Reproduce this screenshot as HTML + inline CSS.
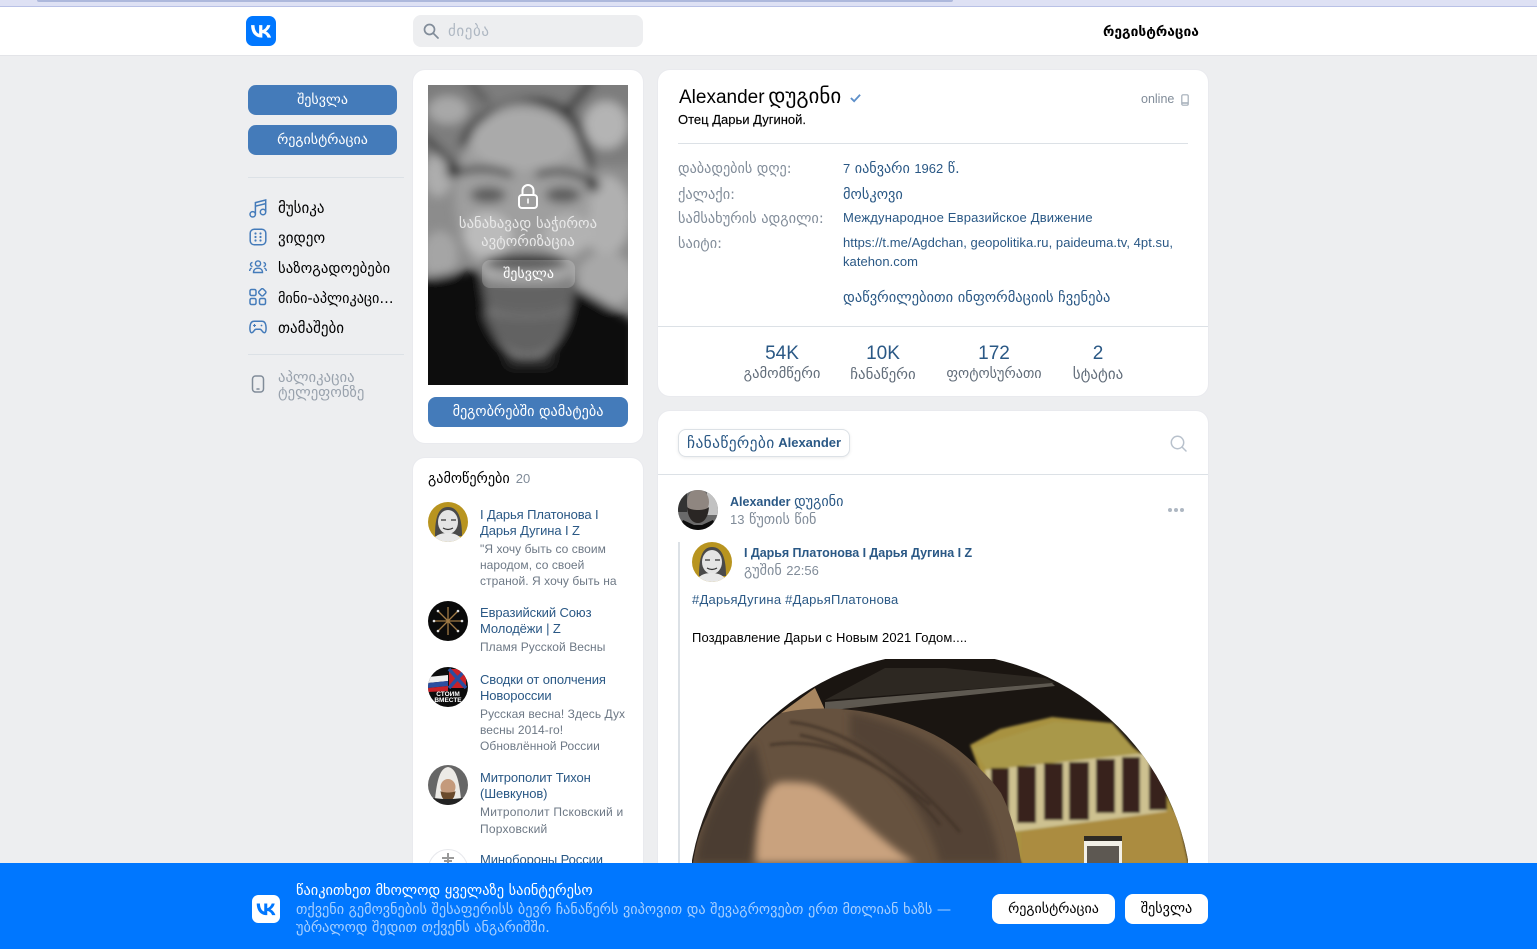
<!DOCTYPE html>
<html lang="ka"><head><meta charset="utf-8"><title>Alexander დუგინი</title>
<style>
html,body{margin:0;padding:0}
body{width:1537px;height:949px;overflow:hidden;background:#edeef0;position:relative;font:13px/16px "Liberation Sans","DejaVu Sans",sans-serif;color:#000}
.a,.t{position:absolute}
.t{white-space:nowrap}
.card{position:absolute;background:#fff;border-radius:12px;box-shadow:0 0 0 1px #e9eaee}
.btn{position:absolute;background:#447bba;color:#fff;border-radius:8px;text-align:center;white-space:nowrap}
.l{color:#2a5885}.g{color:#818c99}
.ka{font-size:14.2px;font-family:"DejaVu Sans",sans-serif}
.n{font:13px "Liberation Sans",sans-serif}
.side{font-size:15px}
.sub{font-size:12px;color:#6d7885;letter-spacing:.06px}
.nm{letter-spacing:-.1px;line-height:16.4px}
.num{width:80px;text-align:center;font-size:19px;line-height:24px}
.lab{width:120px;text-align:center;color:#626d7a;font-size:14.6px}
svg{position:absolute;display:block}
.hr{position:absolute;height:1px;background:#dce1e6}
</style></head><body>

<div class="a" style="left:0;top:0;width:1537px;height:7px;background:#dee1f4;border-bottom:1px solid #b9c1e6;box-sizing:border-box"></div>
<div class="a" style="left:37px;top:0;width:916px;height:2px;background:#adb8dc;border-radius:0 0 3px 3px"></div>

<div class="a" style="left:0;top:7px;width:1537px;height:48px;background:#fff;border-bottom:1px solid #e3e4e8"></div>
<svg style="left:246px;top:16px" width="30" height="30" viewBox="0 0 48 48"><rect width="48" height="48" rx="11" fill="#07f"/><path fill="#fff" d="M25.54 34.58c-10.94 0-17.18-7.5-17.44-19.98h5.48c.18 9.16 4.22 13.04 7.42 13.84V14.6h5.16v7.9c3.16-.34 6.48-3.94 7.6-7.9h5.16c-.86 4.88-4.46 8.48-7.02 9.96 2.56 1.2 6.66 4.34 8.22 10.02h-5.68c-1.22-3.8-4.26-6.74-8.28-7.14v7.14h-.62z"/></svg>
<div class="a" style="left:413px;top:15px;width:230px;height:32px;background:#edeef0;border-radius:8px"></div>
<svg style="left:423px;top:23px" width="16" height="16" viewBox="0 0 16 16" fill="none" stroke="#818c99" stroke-width="1.7"><circle cx="6.5" cy="6.5" r="5"/><path d="M10.3 10.3 15 15" stroke-linecap="round"/></svg>
<div class="t ka" style="left:448px;top:23px;color:#aeb7c2;font-size:15px;letter-spacing:.6px">ძიება</div>
<div class="t ka" style="left:1103px;top:24px;font-weight:bold;font-size:13.8px">რეგისტრაცია</div>

<div class="btn ka" style="left:248px;top:85px;width:149px;height:30px;line-height:31px;font-size:14px">შესვლა</div>
<div class="btn ka" style="left:248px;top:125px;width:149px;height:30px;line-height:31px;font-size:14px">რეგისტრაცია</div>
<div class="hr" style="left:248px;top:177px;width:156px"></div>

<svg style="left:249px;top:198px" width="18" height="20" viewBox="0 0 18 20" fill="none" stroke="#447bba" stroke-width="1.5"><circle cx="3.7" cy="16.3" r="2.7"/><circle cx="14" cy="14" r="2.7"/><path d="M6.4 16.3V4.6L16.7 2v12M6.4 8.2l10.3-2.6"/></svg>
<svg style="left:249px;top:228px" width="18" height="18" viewBox="0 0 18 18" fill="none" stroke="#447bba" stroke-width="1.5"><rect x="1.2" y="1.2" width="15.6" height="15.6" rx="4"/><g fill="#447bba" stroke="none"><circle cx="6.5" cy="5.5" r="1.1"/><circle cx="11.5" cy="5.5" r="1.1"/><circle cx="6.5" cy="9" r="1.1"/><circle cx="11.5" cy="9" r="1.1"/><circle cx="6.5" cy="12.5" r="1.1"/><circle cx="11.5" cy="12.5" r="1.1"/></g></svg>
<svg style="left:249px;top:260px" width="18" height="14" viewBox="0 0 18 14" fill="none" stroke="#447bba" stroke-width="1.4"><circle cx="9" cy="3.5" r="2.6"/><path d="M4.5 12.5c0-3 2-4.3 4.5-4.3s4.5 1.3 4.5 4.3zM3.5 2.5a2 2 0 0 0 0 4M14.5 2.5a2 2 0 0 1 0 4M.7 11c0-1.5.7-2.5 2-3M17.3 11c0-1.5-.7-2.5-2-3"/></svg>
<svg style="left:249px;top:288px" width="18" height="18" viewBox="0 0 18 18" fill="none" stroke="#447bba" stroke-width="1.5"><rect x="1" y="1.5" width="6" height="6" rx="1.5"/><rect x="1" y="10.5" width="6" height="6" rx="1.5"/><rect x="10.5" y="10.5" width="6" height="6" rx="1.5"/><rect x="10.3" y="1.3" width="6" height="6" rx="1.5" transform="rotate(45 13.3 4.3)"/></svg>
<svg style="left:249px;top:320px" width="18" height="14" viewBox="0 0 18 14" fill="none" stroke="#447bba" stroke-width="1.5"><path d="M5 1.2h8c2.2 0 3.3 1.3 3.8 4 .5 3 .5 7.5-1.5 7.5-2 0-2.5-3.5-4.3-3.5H7c-1.8 0-2.3 3.5-4.3 3.5-2 0-2-4.5-1.5-7.5.5-2.7 1.6-4 3.8-4z"/><path d="M5.5 4v3M4 5.5h3" stroke-width="1.1"/><circle cx="12.5" cy="5.5" r=".9" fill="#447bba" stroke="none"/></svg>

<div class="t ka side" style="left:278px;top:200px">მუსიკა</div>
<div class="t ka side" style="left:278px;top:230px">ვიდეო</div>
<div class="t ka side" style="left:278px;top:261px;font-size:14.8px">საზოგადოებები</div>
<div class="t ka side" style="left:278px;top:291px;width:120px;overflow:hidden;text-overflow:ellipsis;font-size:14.2px">მინი-აპლიკაციები</div>
<div class="t ka side" style="left:278px;top:320px">თამაშები</div>
<div class="hr" style="left:248px;top:354px;width:156px"></div>
<svg style="left:251px;top:375px" width="14" height="18" viewBox="0 0 14 18" fill="none" stroke="#818c99" stroke-width="1.5"><rect x="1.5" y="1" width="11" height="16" rx="3"/><path d="M6 14h2" stroke-linecap="round"/></svg>
<div class="t ka g" style="left:278px;top:370px;color:#99a2ad;font-size:14.7px">აპლიკაცია</div>
<div class="t ka g" style="left:278px;top:385px;color:#99a2ad;font-size:14.7px">ტელეფონზე</div>

<div class="card" style="left:413px;top:70px;width:230px;height:373px"></div>
<svg style="left:428px;top:85px" width="200" height="300" viewBox="0 0 200 300">
<defs><filter id="b" x="-20%" y="-20%" width="140%" height="140%"><feGaussianBlur stdDeviation="5"/></filter><clipPath id="c"><rect width="200" height="300"/></clipPath></defs>
<g clip-path="url(#c)"><rect width="200" height="300" fill="#8c8c8c"/><g filter="url(#b)">
<rect x="-10" y="-10" width="220" height="90" fill="#7d7d7d"/>
<ellipse cx="20" cy="25" rx="20" ry="14" fill="#a8a8a8"/><ellipse cx="178" cy="40" rx="22" ry="24" fill="#b4b4b4"/><ellipse cx="10" cy="90" rx="14" ry="22" fill="#adadad"/>
<path d="M-5 50 30 85" stroke="#3a3a3a" stroke-width="7"/><path d="M165 -5 140 25" stroke="#3a3a3a" stroke-width="8"/><path d="M40 -5 60 18" stroke="#555" stroke-width="7"/>
<ellipse cx="178" cy="130" rx="26" ry="40" fill="#b0b0b0"/><ellipse cx="178" cy="195" rx="30" ry="28" fill="#a8a8a8"/><ellipse cx="12" cy="170" rx="18" ry="24" fill="#a5a5a5"/>
<path d="M35 62C40 35 68 22 100 17c30-2 55 12 62 68" fill="none" stroke="#2c2c2c" stroke-width="8"/>
<ellipse cx="95" cy="112" rx="68" ry="94" fill="#9f9f9f"/>
<ellipse cx="95" cy="55" rx="52" ry="30" fill="#aaa"/>
<path d="M22 90q32-12 62 0M108 90q30-10 58 8" stroke="#2e2e2e" stroke-width="6" fill="none"/>
<circle cx="25" cy="86" r="7" fill="#222"/><circle cx="165" cy="100" r="7" fill="#333"/>
<ellipse cx="60" cy="110" rx="18" ry="8" fill="#5c5c5c"/><ellipse cx="135" cy="110" rx="18" ry="8" fill="#5c5c5c"/>
<ellipse cx="60" cy="150" rx="24" ry="22" fill="#bbb"/><ellipse cx="140" cy="150" rx="24" ry="20" fill="#b2b2b2"/>
<ellipse cx="98" cy="178" rx="42" ry="10" fill="#3a3a3a"/>
<path d="M48 190c20 8 80 8 102 0l-5 30c-14 14-78 14-90 0z" fill="#636363"/>
<path d="M-10 195 52 183l8 52c8 26 24 42 40 42s34-18 42-48l5-27 60 34v90H-10z" fill="#0c0c0c"/>
<path d="M55 225c10 32 26 45 45 45s34-14 42-45c-18 10-70 10-87 0z" fill="#626262"/>
<path d="M72 268c10 8 45 8 58 0l-8 14H82z" fill="#2c2c2c"/>
</g></g>
<g fill="none" stroke="#fff" stroke-width="2"><rect x="91" y="110" width="18" height="13" rx="3"/><path d="M94.5 110v-4.5a5.500 5.500 0 0 1 11 0v4.5"/></g><rect x="99.2" y="113.5" width="1.6" height="5" fill="#fff"/>
</svg>
<div class="t ka" style="left:428px;top:215px;width:200px;text-align:center;color:#e8e8e8;line-height:18px;white-space:normal;font-size:14.7px">სანახავად საჭიროა<br>ავტორიზაცია</div>
<div class="btn ka" style="left:482px;top:260px;width:93px;height:28px;line-height:29px;background:rgba(255,255,255,.2);font-size:14px">შესვლა</div>
<div class="btn ka" style="left:428px;top:397px;width:200px;height:30px;line-height:31px">მეგობრებში დამატება</div>

<div class="card" style="left:413px;top:458px;width:230px;height:420px"></div>
<div class="t ka" style="left:428px;top:471px">გამოწერები<span class="n g" style="margin-left:6px">20</span></div>

<svg style="left:428px;top:502px" width="40" height="40" viewBox="0 0 40 40"><defs><clipPath id="r"><circle cx="20" cy="20" r="20"/></clipPath></defs><g clip-path="url(#r)"><rect width="40" height="40" fill="#b8941f"/><path d="M7 34c0-18 3-29 13-29s14 11 14 29z" fill="#4a4a4a"/><ellipse cx="20" cy="20" rx="10" ry="12" fill="#e4e4e4"/><path d="M5 40c1-7 8-9 15-9s13 3 15 9z" fill="#e8e8e8"/><path d="M13 18h5M23 18h5M15 26q5 3 10 0" stroke="#333" stroke-width="1.2" fill="none"/></g></svg>
<div class="t l nm" style="left:480px;top:507px">I Дарья Платонова I<br>Дарья Дугина I Z</div>
<div class="t sub" style="left:480px;top:541px">"Я хочу быть со своим<br>народом, со своей<br>страной. Я хочу быть на</div>

<svg style="left:428px;top:601px" width="40" height="40" viewBox="0 0 40 40"><circle cx="20" cy="20" r="20" fill="#0a0a0a"/><g stroke="#a07a45" stroke-width="1.3"><path d="M20 6v28M6 20h28M10 10l20 20M30 10 10 30"/></g><g fill="#ddd"><circle cx="10" cy="10" r="1.3"/><circle cx="30" cy="10" r="1.3"/><circle cx="10" cy="30" r="1.3"/><circle cx="30" cy="30" r="1.3"/><circle cx="6" cy="20" r="1.3"/><circle cx="34" cy="20" r="1.3"/></g></svg>
<div class="t l nm" style="left:480px;top:605px">Евразийский Союз<br>Молодёжи | Z</div>
<div class="t sub" style="left:480px;top:639px">Пламя Русской Весны</div>

<svg style="left:428px;top:667px" width="40" height="40" viewBox="0 0 40 40"><defs><clipPath id="s"><circle cx="20" cy="20" r="20"/></clipPath></defs><g clip-path="url(#s)"><rect width="40" height="40" fill="#0c0c0c"/><path d="M0 10 20 8v6L0 16z" fill="#eee"/><path d="M0 16l20-2v5L0 21z" fill="#2b4ea0"/><path d="M0 21l20-2v5L0 25z" fill="#c92027"/><path d="M21 2h17v19H21z" fill="#c92027"/><path d="M21 2 38 21M38 2 21 21" stroke="#2b4ea0" stroke-width="3.5"/></g><text x="20" y="29" text-anchor="middle" font-size="6.5" font-weight="bold" fill="#fff" font-family="Liberation Sans">СТОИМ</text><text x="20" y="35" text-anchor="middle" font-size="6.5" font-weight="bold" fill="#fff" font-family="Liberation Sans">ВМЕСТЕ</text></svg>
<div class="t l nm" style="left:480px;top:672px">Сводки от ополчения<br>Новороссии</div>
<div class="t sub" style="left:480px;top:706px">Русская весна! Здесь Дух<br>весны 2014-го!<br>Обновлённой России</div>

<svg style="left:428px;top:765px" width="40" height="40" viewBox="0 0 40 40"><defs><clipPath id="m"><circle cx="20" cy="20" r="20"/></clipPath></defs><g clip-path="url(#m)"><rect width="40" height="40" fill="#666"/><path d="M7 34C9 15 12 3 20 2c8 1 11 13 13 32z" fill="#eceae6"/><ellipse cx="20" cy="22" rx="7.5" ry="8" fill="#c49a7c"/><path d="M12.5 26c1 8 4 10 7.5 10s6.5-2 7.5-10c-2 2-13 2-15 0z" fill="#6a4a2c"/><path d="M0 40l5-7 10 1h10l10-1 5 7z" fill="#222"/></g></svg>
<div class="t l nm" style="left:480px;top:770px">Митрополит Тихон<br>(Шевкунов)</div>
<div class="t sub" style="left:480px;top:804px;line-height:16.5px;letter-spacing:.22px">Митрополит Псковский и<br>Порховский</div>

<svg style="left:428px;top:849px" width="40" height="40" viewBox="0 0 40 40"><circle cx="20" cy="20" r="19.5" fill="#fff" stroke="#e7e8ec"/><path d="M20 4v12M14 9h12M16 12h8" stroke="#999" stroke-width="2"/></svg>
<div class="t l nm" style="left:480px;top:852px">Минобороны России</div>

<div class="card" style="left:658px;top:70px;width:550px;height:326px"></div>
<div class="t" style="left:679px;top:84px;line-height:24px"><span style="font-size:19px">Alexander</span> <span style="font-family:'DejaVu Sans';font-size:21px">დუგინი</span></div>
<svg style="left:850px;top:93px" width="11" height="10" viewBox="0 0 12 10" fill="none" stroke="#5d8fc9" stroke-width="2"><path d="M1 5l3.5 3.5L11 1.5"/></svg>
<div class="t" style="left:678px;top:112px;font-size:13px;-webkit-text-stroke:.15px #000">Отец Дарьи Дугиной.</div>
<div class="t g" style="left:1141px;top:91px;font-size:12.5px">online</div>
<svg style="left:1181px;top:94px" width="8" height="12" viewBox="0 0 8 12" fill="none" stroke="#a3adb8" stroke-width="1.2"><rect x=".8" y=".8" width="6.4" height="10.4" rx="1.2"/><path d="M.8 9h6.4" stroke-width="1.5"/></svg>
<div class="hr" style="left:678px;top:143px;width:510px"></div>

<div class="t ka g" style="left:678px;top:161px">დაბადების დღე:</div>
<div class="t ka g" style="left:678px;top:187px;font-size:14.4px">ქალაქი:</div>
<div class="t ka g" style="left:678px;top:211px;font-size:14.4px">სამსახურის ადგილი:</div>
<div class="t ka g" style="left:678px;top:236px;font-size:14.4px">საიტი:</div>
<div class="t ka l" style="left:843px;top:161px"><span class="n">7</span> იანვარი <span class="n">1962</span> წ.</div>
<div class="t ka l" style="left:843px;top:187px;font-size:14.4px">მოსკოვი</div>
<div class="t l" style="left:843px;top:210px;letter-spacing:.18px">Международное Евразийское Движение</div>
<div class="t l" style="left:843px;top:233px;line-height:19px;letter-spacing:.05px">https://t.me/Agdchan, geopolitika.ru, paideuma.tv, 4pt.su,<br>katehon.com</div>
<div class="t ka l" style="left:843px;top:290px;font-size:14.5px">დაწვრილებითი ინფორმაციის ჩვენება</div>
<div class="hr" style="left:658px;top:326px;width:550px"></div>

<div class="t l num" style="left:742px;top:342px">54K</div>
<div class="t ka lab" style="left:722px;top:366px">გამომწერი</div>
<div class="t l num" style="left:843px;top:342px">10K</div>
<div class="t ka lab" style="left:823px;top:366px;font-size:14.9px">ჩანაწერი</div>
<div class="t l num" style="left:954px;top:342px">172</div>
<div class="t ka lab" style="left:934px;top:366px;font-size:14.2px">ფოტოსურათი</div>
<div class="t l num" style="left:1058px;top:342px">2</div>
<div class="t ka lab" style="left:1038px;top:366px;font-size:15px">სტატია</div>

<div class="card" style="left:658px;top:411px;width:550px;height:480px"></div>
<div class="a" style="left:678px;top:429px;width:172px;height:28px;box-sizing:border-box;border:1px solid #dce1e6;border-radius:8px;background:#fff;box-shadow:0 1px 3px rgba(0,0,0,.08)"></div>
<div class="t l" style="left:687px;top:435px"><span class="ka" style="font-size:15.5px;letter-spacing:.35px">ჩანაწერები</span> <b style="font-size:13px;position:relative;top:-1px">Alexander</b></div>
<svg style="left:1170px;top:435px" width="17" height="17" viewBox="0 0 17 17" fill="none" stroke="#b8c1cc" stroke-width="1.5"><circle cx="7.5" cy="7.5" r="6.2"/><path d="M12 12l4 4" stroke-linecap="round"/></svg>
<div class="hr" style="left:658px;top:474px;width:550px"></div>

<svg style="left:678px;top:490px" width="40" height="40" viewBox="0 0 40 40"><defs><clipPath id="p"><circle cx="20" cy="20" r="20"/></clipPath></defs><g clip-path="url(#p)"><rect width="40" height="40" fill="#6a6a6a"/><rect x="29" width="11" height="25" fill="#c2c2c2"/><rect width="9" height="22" fill="#333"/><ellipse cx="20" cy="12" rx="11" ry="13" fill="#8f8680"/><path d="M9 17c1 12 6 16 11 16s10-4 11-16c-4 4-18 4-22 0z" fill="#2a2624"/><path d="M0 40l5-10 11 5h8l11-5 5 10z" fill="#0c0c0c"/></g></svg>
<div class="t l" style="left:730px;top:494px"><b style="font-size:12.5px">Alexander</b> <span class="ka">დუგინი</span></div>
<div class="t ka g" style="left:730px;top:512px"><span class="n">13</span> წუთის წინ</div>
<svg style="left:1167px;top:507px" width="18" height="6" viewBox="0 0 18 6" fill="#aeb7c2"><circle cx="3" cy="3" r="2"/><circle cx="9" cy="3" r="2"/><circle cx="15" cy="3" r="2"/></svg>

<div class="a" style="left:678px;top:542px;width:2px;height:330px;background:#dce1e6"></div>
<svg style="left:692px;top:542px" width="40" height="40" viewBox="0 0 40 40"><defs><clipPath id="r2"><circle cx="20" cy="20" r="20"/></clipPath></defs><g clip-path="url(#r2)"><rect width="40" height="40" fill="#b8941f"/><path d="M7 34c0-18 3-29 13-29s14 11 14 29z" fill="#4a4a4a"/><ellipse cx="20" cy="20" rx="10" ry="12" fill="#e4e4e4"/><path d="M5 40c1-7 8-9 15-9s13 3 15 9z" fill="#e8e8e8"/><path d="M13 18h5M23 18h5M15 26q5 3 10 0" stroke="#333" stroke-width="1.2" fill="none"/></g></svg>
<div class="t l" style="left:744px;top:545px;font-weight:bold;font-size:12.5px;letter-spacing:-.05px">I Дарья Платонова I Дарья Дугина I Z</div>
<div class="t ka g" style="left:744px;top:563px">გუშინ <span class="n">22:56</span></div>
<div class="t l" style="left:692px;top:592px;letter-spacing:.25px">#ДарьяДугина #ДарьяПлатонова</div>
<div class="t" style="left:692px;top:630px;letter-spacing:.1px">Поздравление Дарьи с Новым 2021 Годом....</div>

<svg style="left:692px;top:659px" width="496" height="204" viewBox="692 659 496 204">
<defs><clipPath id="ci"><circle cx="940" cy="905" r="252"/></clipPath><filter id="sb"><feGaussianBlur stdDeviation="1.2"/></filter><filter id="sc"><feGaussianBlur stdDeviation="4"/></filter></defs>
<g clip-path="url(#ci)">
<rect x="692" y="659" width="496" height="204" fill="#1a1511"/>
<path d="M825 700 885 668h60l100 10 10 5-230 17z" fill="#2d2822"/>
<path d="M825 702 1052 683l3 3-170 18-60 7z" fill="#5e5951"/>
<path d="M781 713l34-25 10 22-22 4z" fill="#a88660"/>
<g filter="url(#sb)">
<path d="M970 745l30-16 52-12 60 6 21 24 20 16 24 54 10 46h-166l-37-80z" fill="#a8923f"/>
<path d="M972 748l82-26 58 2 25 30-146 22z" fill="#a99848"/>
<path d="M985 770l170-18 12 60-172 22z" fill="#cdc190"/>
<g fill="#38231a"><rect x="991" y="768" width="18" height="49"/><rect x="1017" y="766" width="19" height="57"/><rect x="1044" y="763" width="19" height="57"/><rect x="1069" y="762" width="20" height="58"/><rect x="1096" y="759" width="19" height="54"/><rect x="1122" y="757" width="18" height="56"/><rect x="1149" y="760" width="18" height="50"/></g>
<path d="M1021 832l156-22 12 55H1021z" fill="#ab8c40"/>
</g>
<rect x="1084" y="836" width="38" height="5" fill="#2e2a24"/>
<rect x="1084" y="841" width="38" height="22" fill="#f2f0e8"/><rect x="1087" y="846" width="32" height="17" fill="#5d5852"/>
<path d="M781 713c25-6 60-6 90 0 45 10 75 25 96 44 17 15 27 26 34 36 10 20 17 45 20 70H693c3-20 8-35 14-46 15-40 45-85 74-104z" fill="#66523f"/>
<g filter="url(#sc)"><path d="M850 712c40 10 80 25 110 55 20 25 35 60 40 96h-60c-10-40-40-90-90-125z" fill="#524234"/><path d="M695 863c5-40 30-90 60-120l10 40-15 80z" fill="#4c3d33"/></g>
<path d="M790 722c50 5 110 40 170 110M800 735c50 10 100 40 140 90M770 745c60-10 110 20 160 60" stroke="#3f3126" stroke-width="3" fill="none" opacity=".7" filter="url(#sb)"/>
<path d="M756 863c0-26 3-50 10-66 5-12 12-15 17-15 12 0 22 0 32 3 13 6 24 15 34 24 12 11 23 21 34 30 11 9 22 18 33 24z" fill="#c9a27e" filter="url(#sc)"/>
</g></svg>

<div class="a" style="left:0;top:863px;width:1537px;height:86px;background:#07f"></div>
<svg style="left:252px;top:895px" width="28" height="28" viewBox="0 0 48 48"><rect width="48" height="48" rx="11" fill="#fff"/><path fill="#07f" d="M25.54 34.58c-10.94 0-17.18-7.5-17.44-19.98h5.48c.18 9.16 4.22 13.04 7.42 13.84V14.6h5.16v7.9c3.16-.34 6.48-3.94 7.6-7.9h5.16c-.86 4.88-4.46 8.48-7.02 9.96 2.56 1.2 6.66 4.34 8.22 10.02h-5.68c-1.22-3.8-4.26-6.74-8.28-7.14v7.14h-.62z"/></svg>
<div class="t ka" style="left:296px;top:883px;color:#fff;font-size:14.4px">წაიკითხეთ მხოლოდ ყველაზე საინტერესო</div>
<div class="t ka" style="left:296px;top:901px;color:#a8d0ff;line-height:18px;font-size:14.25px">თქვენი გემოვნების შესაფერისს ბევრ ჩანაწერს ვიპოვით და შევაგროვებთ ერთ მთლიან ხაზს —<br>უბრალოდ შედით თქვენს ანგარიშში.</div>
<div class="btn ka" style="left:992px;top:894px;width:123px;height:30px;line-height:31px;background:#fff;color:#000;font-size:14px">რეგისტრაცია</div>
<div class="btn ka" style="left:1125px;top:894px;width:83px;height:30px;line-height:31px;background:#fff;color:#000;font-size:14.2px">შესვლა</div>
</body></html>
